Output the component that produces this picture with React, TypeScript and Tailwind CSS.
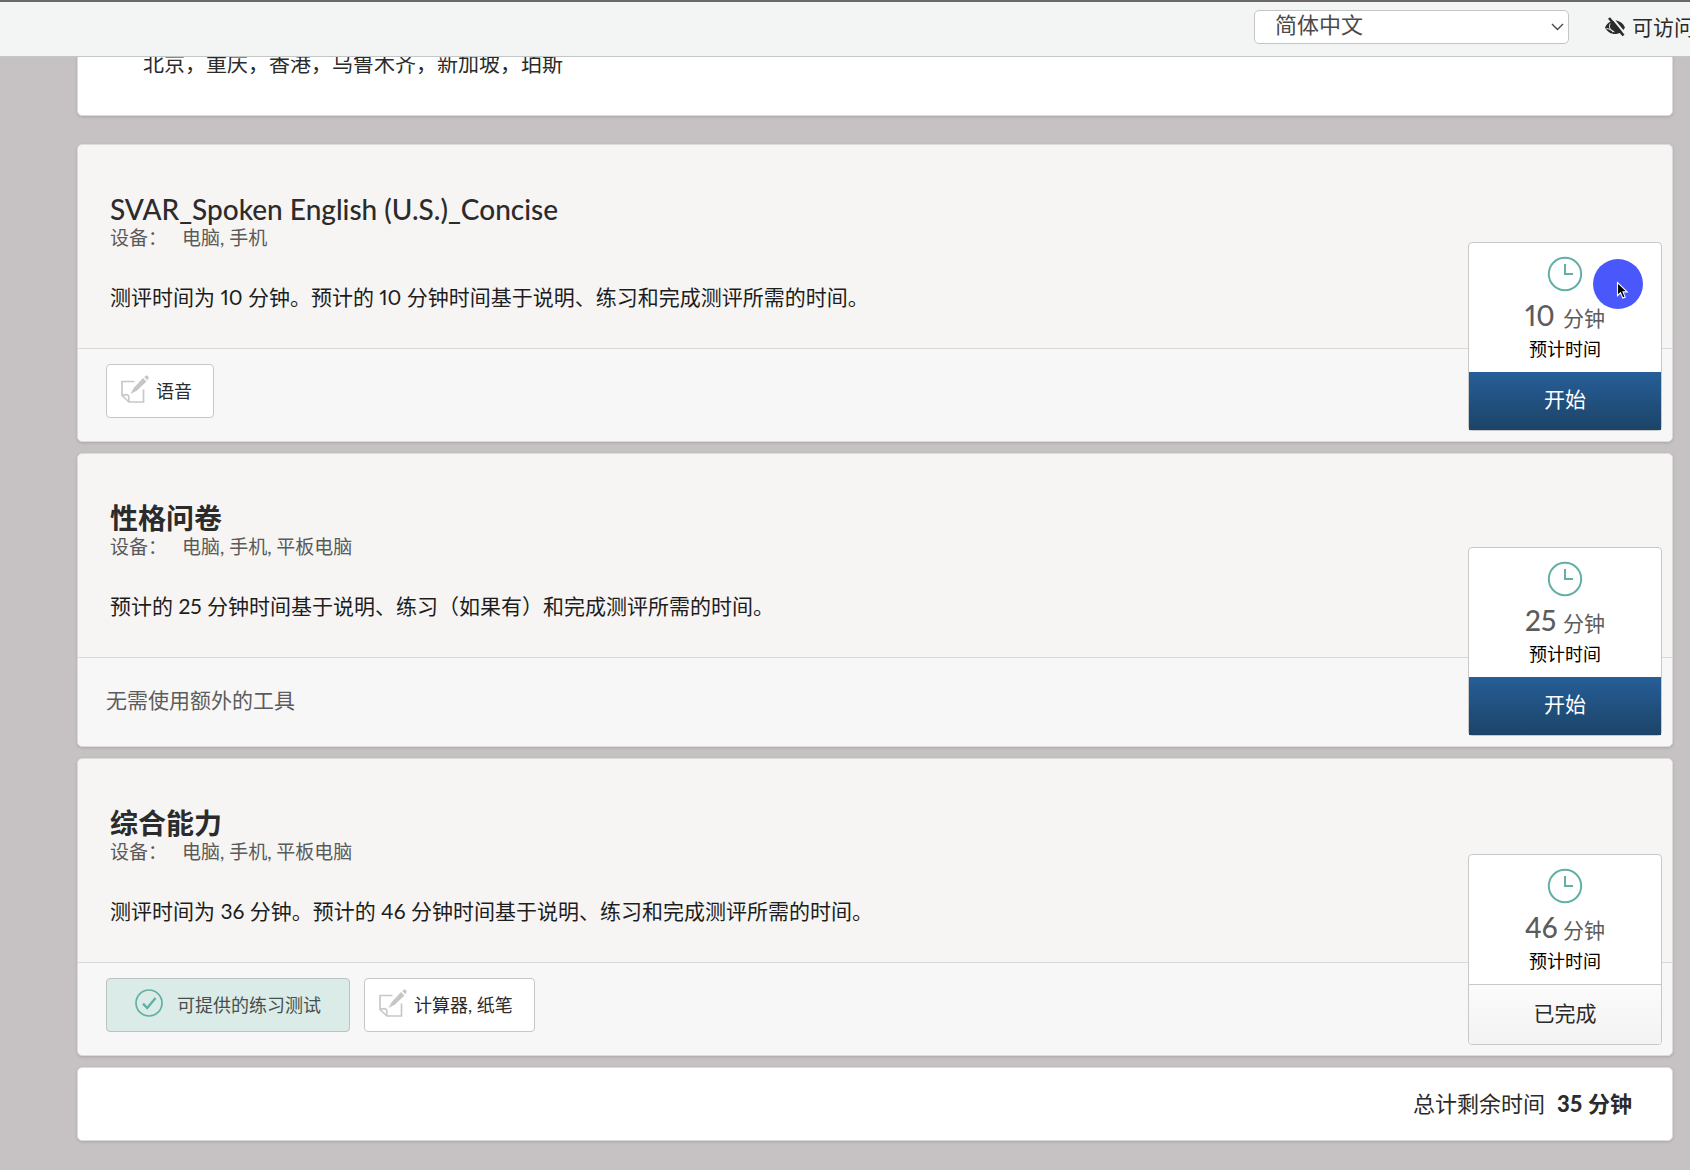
import React from 'react';

interface Assessment {
  id: string;
  title: string;
  devices: string;
  description: string;
  minutes: number;
  practice?: boolean;
  tools?: string;
  completed?: boolean;
}

const assessments: Assessment[] = [
  {
    id: 'svar',
    title: 'SVAR_Spoken English (U.S.)_Concise',
    devices: '电脑, 手机',
    description: '测评时间为 10 分钟。预计的 10 分钟时间基于说明、练习和完成测评所需的时间。',
    minutes: 10,
    tools: '语音'
  },
  {
    id: 'personality',
    title: '性格问卷',
    devices: '电脑, 手机, 平板电脑',
    description: '预计的 25 分钟时间基于说明、练习（如果有）和完成测评所需的时间。',
    minutes: 25
  },
  {
    id: 'ability',
    title: '综合能力',
    devices: '电脑, 手机, 平板电脑',
    description: '测评时间为 36 分钟。预计的 46 分钟时间基于说明、练习和完成测评所需的时间。',
    minutes: 46,
    practice: true,
    tools: '计算器, 纸笔',
    completed: true
  }
];

const ClockIcon = () => (
  <svg width="36" height="36" viewBox="0 0 36 36" fill="none" stroke="#62b0a5" strokeWidth="2" aria-hidden="true">
    <circle cx="18" cy="18" r="16.2" />
    <path d="M18 8v10h8" />
  </svg>
);

const CheckIcon = () => (
  <svg width="28" height="28" viewBox="0 0 28 28" fill="none" stroke="#62b0a5" aria-hidden="true">
    <circle cx="14" cy="14" r="13" strokeWidth="1.7" />
    <path d="M8 14.6l4.2 4.4L20.5 9" strokeWidth="2.4" />
  </svg>
);

const NoteIcon = () => (
  <svg width="28" height="28" viewBox="0 0 28 28" fill="none" aria-hidden="true">
    <path d="M13.5 6.5H1V20.5L8 27H22.5V14.5" stroke="#c8c8c8" strokeWidth="1.7" />
    <path d="M1 20.5C3.5 19.6 7 19 7.6 21s-.3 4 .5 6" stroke="#c8c8c8" strokeWidth="1.6" />
    <path d="M9.5 19l3.2-6L22 3l3.5 3.5-9.5 9z" fill="#c6c6c6" />
    <path d="M23.2 2L24.8.8c1.5-1 3.6 1.2 2.6 2.6L26.3 5.2z" fill="#c6c6c6" />
  </svg>
);

const LowVisionIcon = () => (
  <svg width="20" height="20" viewBox="0 0 20 20" className="shrink-0" aria-hidden="true">
    <path d="M0 10.5C2.5 5.5 6 3.500 10 3.500s7.5 2 10 7c-2.5 4.5-6 6.5-10 6.500S2.500 15 0 10.500z" fill="#2b2b2b" />
    <path d="M5.2 6.500c-1.400 3-.6 6.200 2.800 8.500M1.500 11.500c3 .5 5.500 1.500 8 3.500" fill="none" stroke="#f3f5f5" />
    <path d="M6.5 0L20 16.5" stroke="#f3f5f5" strokeWidth="2" />
    <path d="M4 1l14.5 17.5" stroke="#2b2b2b" strokeWidth="2.6" />
  </svg>
);

const Pointer = () => (
  <div className="pointer-events-none absolute top-4 right-[18px] size-[50px] rounded-full bg-[#4a58fb]">
    <svg className="absolute top-[22px] left-[23px]" width="14" height="20" viewBox="0 0 14 20" aria-hidden="true">
      <path d="M1.5 1.5v13.2l3-2.9 2.3 5.3 2.4-1-2.2-5.2h4.2z" fill="#000" stroke="#fff" strokeWidth="1.1" />
    </svg>
  </div>
);

const TimePanel: React.FC<{ minutes: number; completed?: boolean; children?: React.ReactNode }> = ({
  minutes,
  completed,
  children
}) => (
  <div className="absolute right-[10px] bottom-[10px] w-[194px] rounded-[4px] border border-[#c8c8c8] bg-white text-center">
    <div className="flex h-[129px] flex-col items-center pt-[13px]">
      <ClockIcon />
      <p className="mt-[7px] flex items-baseline text-[21px] leading-8 text-[#5c5c5c]">
        <span className="w-[38px] text-left text-[28px] font-medium proportional-nums">{minutes}</span>
        分钟
      </p>
      <p className="text-lg leading-[30px] text-black">预计时间</p>
    </div>
    {completed ? (
      <button
        type="button"
        disabled
        className="block h-[60px] w-full rounded-b-[3px] border-t border-[#c8c8c8] bg-linear-to-b from-[#fbfbfb] to-[#f3f3f3] pb-1 text-[21px] text-[#2a2a2a]"
      >
        已完成
      </button>
    ) : (
      <button
        type="button"
        className="block h-[58px] w-full cursor-pointer bg-linear-to-b from-[#265e98] to-[#1c4468] pb-1 text-[21px] text-white"
      >
        开始
      </button>
    )}
    {children}
  </div>
);

const AssessmentCard: React.FC<{ item: Assessment; children?: React.ReactNode }> = ({ item, children }) => (
  <article className="relative rounded-[5px] border border-[#dcdada] bg-[#f6f5f4] shadow-[0_1px_3px_rgba(0,0,0,0.15)]">
    <div className="border-b border-[#d9d9d9] px-8 pt-[49px] pb-9">
      <h2
        className={
          /^[A-Z]/.test(item.title)
            ? 'text-[28px] leading-[30px] font-medium text-[#2b2b2b]'
            : 'text-[28px] leading-[30px] font-bold text-[#2b2b2b]'
        }
      >
        {item.title}
      </h2>
      <p className="flex gap-[15px] text-[19px] leading-7 text-[#5a5a5a]">
        <span>设备：</span>
        <span>{item.devices}</span>
      </p>
      <p className="mt-[30px] text-[21px] leading-[30px] text-[#1d1d1d] proportional-nums">{item.description}</p>
    </div>
    <div className="flex min-h-[88px] items-start gap-[14px] rounded-b-[5px] bg-[#f7f7f7] px-7 pt-[15px] pb-[23px] text-lg">
      {item.practice && (
        <div className="flex h-[54px] items-center gap-[14px] rounded-[4px] border border-[#bcc4c2] bg-[#dbebe8] px-7 pb-1 text-[#454f4d]">
          <CheckIcon />
          <span className="pt-1">可提供的练习测试</span>
        </div>
      )}
      {item.tools ? (
        <div className="flex h-[54px] items-center gap-[7px] rounded-[4px] border border-[#c6c6c6] bg-white pr-[21px] pb-1 pl-[14px] text-[#2b2b2b]">
          <NoteIcon />
          <span className="pt-1">{item.tools}</span>
        </div>
      ) : (
        <p className="pt-3 text-[21px] leading-[30px] text-[#5c5c5c]">无需使用额外的工具</p>
      )}
    </div>
    {children}
  </article>
);

export default function App() {
  return (
    <div
      lang="zh-CN"
      className="min-h-screen overflow-hidden bg-[#c6c2c3] font-['Lato','Noto_Sans_CJK_SC',sans-serif]"
    >
      <header className="fixed inset-x-0 top-0 z-10 flex h-[57px] items-start justify-end gap-9 overflow-hidden border-t-2 border-b border-t-[#6a686a] border-b-[#c4c7c7] bg-[#f3f5f5] pt-2">
        <div className="relative w-[315px]">
          <select
            aria-label="语言"
            className="h-[34px] w-full appearance-none rounded-[5px] border border-[#c4c4c4] bg-white pb-1 pl-5 text-[22px] leading-7 text-[#4a4a4a]"
          >
            <option>简体中文</option>
          </select>
          <svg
            className="pointer-events-none absolute top-[13px] right-[5px]"
            width="13"
            height="8"
            viewBox="0 0 13 8"
            fill="none"
            stroke="#4a4a4a"
            strokeWidth="1.4"
            aria-hidden="true"
          >
            <path d="M1 1l5.5 5.5L12 1" />
          </svg>
        </div>
        <a href="#accessibility" className="flex h-[34px] w-[85px] items-center gap-[7px] text-[21px] whitespace-nowrap text-[#2b2b2b]">
          <LowVisionIcon />
          <span>可访问</span>
        </a>
      </header>

      <main className="pr-[17px] pb-[26px] pl-[77px]">
        <section className="rounded-b-[5px] border border-[#dcdada] bg-white px-[65px] pt-[47px] pb-[37px] shadow-[0_1px_3px_rgba(0,0,0,0.15)]">
          <p className="text-[21px] leading-[30px] text-[#2b2b2b]">北京，重庆，香港，乌鲁木齐，新加坡，珀斯</p>
        </section>

        <div className="mt-7 flex flex-col gap-[11px]">
          {assessments.map((item, index) => (
            <AssessmentCard key={item.id} item={item}>
              <TimePanel minutes={item.minutes} completed={item.completed}>
                {index === 0 && <Pointer />}
              </TimePanel>
            </AssessmentCard>
          ))}

          <section className="flex items-center justify-end gap-3 rounded-[5px] border border-[#dcdada] bg-white px-10 py-5 text-[22px] leading-8 text-[#2b2b2b] shadow-[0_1px_3px_rgba(0,0,0,0.15)]">
            <span>总计剩余时间</span>
            <strong className="font-bold">
              <span className="font-black">35</span> 分钟
            </strong>
          </section>
        </div>
      </main>
    </div>
  );
}
